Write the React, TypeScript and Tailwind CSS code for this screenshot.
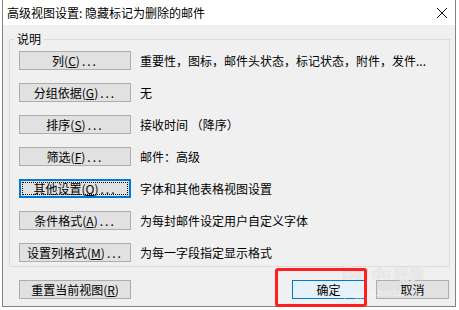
import type { ReactNode } from "react";

const font = { fontFamily: '"Noto Sans CJK SC", "Noto Sans", sans-serif' };

type Row = { label: ReactNode; desc: string; focused?: boolean };

const u = (c: string) => <span className="underline decoration-1 underline-offset-1">{c}</span>;
const dots = <span className="ml-[2px] tracking-[2px]">...</span>;

const rows: Row[] = [
  { label: <>列({u("C")}){dots}</>, desc: "重要性，图标，邮件头状态，标记状态，附件，发件..." },
  { label: <>分组依据({u("G")}){dots}</>, desc: "无" },
  { label: <>排序({u("S")}){dots}</>, desc: "接收时间 （降序）" },
  { label: <>筛选({u("F")}){dots}</>, desc: "邮件：高级" },
  { label: <>其他设置({u("O")}){dots}</>, desc: "字体和其他表格视图设置", focused: true },
  { label: <>条件格式({u("A")}){dots}</>, desc: "为每封邮件设定用户自定义字体" },
  { label: <>设置列格式({u("M")}){dots}</>, desc: "为每一字段指定显示格式" },
];

function Btn({ children, focused, w = "w-[112px]" }: { children: ReactNode; focused?: boolean; w?: string }) {
  if (focused) {
    return (
      <div className={`${w} h-[19px] shrink-0 border-2 border-[#0078d7] bg-[#e1e1e1] p-[1px]`}>
        <div className="flex h-full items-center justify-center border border-dotted border-black text-[12px] leading-none text-black">
          {children}
        </div>
      </div>
    );
  }
  return (
    <div className={`${w} flex h-[19px] shrink-0 items-center justify-center border border-[#adadad] bg-[#e1e1e1] text-[12px] leading-none text-black`}>
      {children}
    </div>
  );
}

export default function App() {
  return (
    <div className="relative h-[310px] w-[459px] overflow-hidden bg-white" style={font}>
      <div className="ml-[2px] flex h-[307px] w-[454px] flex-col border border-t-0 border-[#838383]">
        <div className="flex h-[25px] shrink-0 items-center justify-between bg-white pl-[4px] pr-[7px]">
          <span className="text-[12px] text-black">高级视图设置: 隐藏标记为删除的邮件</span>
          <svg width="12" height="12" viewBox="0 0 12 12" className="mt-[1px]">
            <path d="M1 1L11 11M11 1L1 11" stroke="#111" strokeWidth="1" />
          </svg>
        </div>
        <div className="flex-1 bg-[#f0f0f0] pl-[6px] pt-[6px]">
          <fieldset className="w-[441px] border border-[#dcdcdc] px-[9px] pb-[4px] pt-[4px]">
            <legend className="ml-[-5px] h-[16px] px-[3px] text-[12px] leading-[16px] text-black">说明</legend>
            <div className="flex flex-col gap-[13px]">
              {rows.map((r, i) => (
                <div key={i} className="flex items-center gap-[9px]">
                  <Btn focused={r.focused}>{r.label}</Btn>
                  <span className="whitespace-nowrap text-[12px] leading-none text-black">{r.desc}</span>
                </div>
              ))}
            </div>
          </fieldset>
          <div className="mt-[13px] flex items-center pl-[10px]">
            <Btn>重置当前视图({u("R")})</Btn>
            <div className="ml-auto mr-[6px] flex gap-[11px]">
              <div className="flex h-[19px] w-[73px] items-center justify-center border border-[#0078d7] bg-[#e5f1fb] text-[12px] leading-none text-black">
                确定
              </div>
              <Btn w="w-[73px]">取消</Btn>
            </div>
          </div>
        </div>
      </div>

      <div className="pointer-events-none absolute left-[342px] top-[263px] flex items-end gap-[3px] text-white/60 [text-shadow:0_0_1px_#c8c8c8]">
        <span className="text-[17px] font-bold leading-none">Bai</span>
        <span className="text-[15px] font-bold leading-none">du</span>
        <span className="text-[15px] font-bold leading-none">经验</span>
      </div>
      <div className="pointer-events-none absolute left-[344px] top-[288px] text-[9px] leading-none text-white/50">
        jingyan.baidu.com
      </div>

      <div className="pointer-events-none absolute left-[275px] top-[268px] h-[39px] w-[92px] rounded-[3px] border-[3px] border-[#ff1f1f]" />
    </div>
  );
}
